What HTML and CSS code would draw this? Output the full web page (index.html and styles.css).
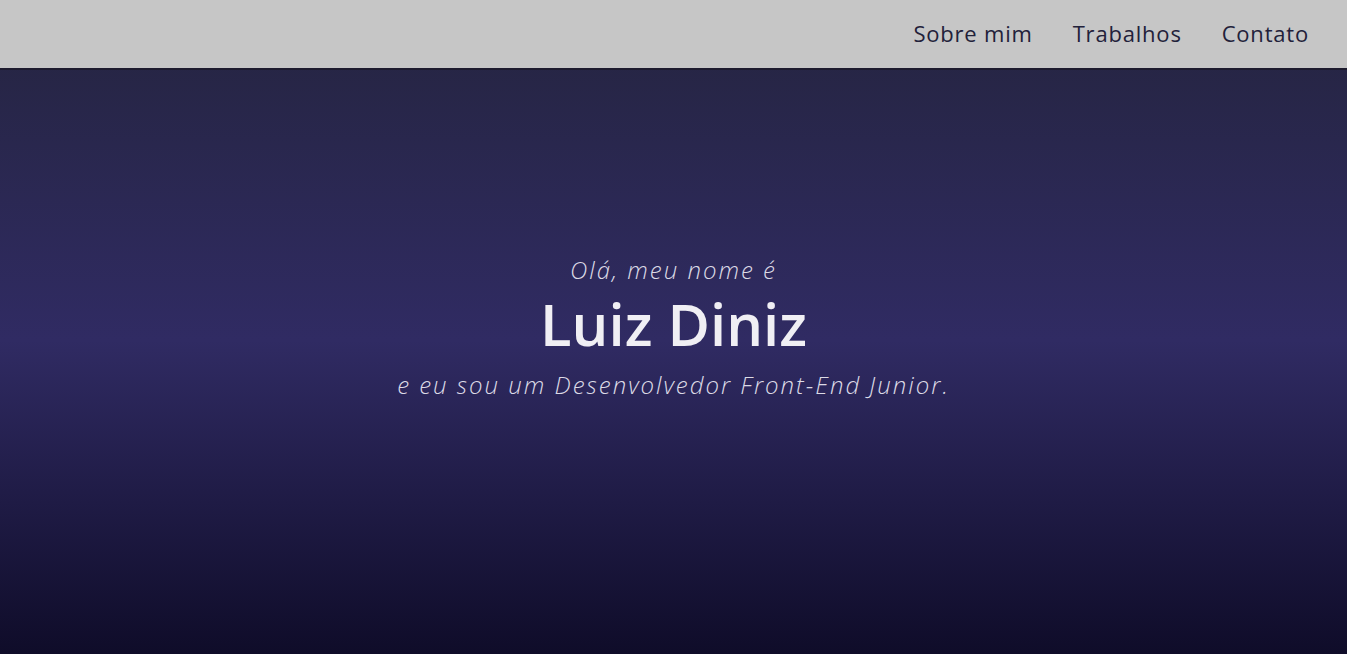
FILE: index.html
```html
<!DOCTYPE html>
<html lang="pt-BR">
<head>
<meta charset="utf-8">
<title>Luiz Diniz</title>
<link rel="stylesheet" href="styles.css">
</head>
<body>
<header class="topbar">
  <nav class="nav">
    <a href="#sobre" class="nav-link">Sobre mim</a>
    <a href="#trabalhos" class="nav-link">Trabalhos</a>
    <a href="#contato" class="nav-link">Contato</a>
  </nav>
</header>
<main>
  <section class="hero">
    <p class="hero-intro">Olá, meu nome é</p>
    <h1 class="hero-name">Luiz Diniz</h1>
    <p class="hero-role">e eu sou um Desenvolvedor Front-End Junior.</p>
  </section>
</main>
</body>
</html>
```

FILE: styles.css
```css
* { box-sizing: border-box; }
html, body { margin: 0; padding: 0; }
body {
  font-family: "Open Sans", "Liberation Sans", sans-serif;
  background: #0f0c29;
}
.topbar {
  position: fixed;
  top: 0; left: 0; right: 0;
  height: 70px;
  background: #c6c6c6;
  border-bottom: 2px solid #1d1b2e;
  display: flex;
  justify-content: flex-end;
  align-items: center;
  padding-right: 38px;
  z-index: 10;
}
.nav { display: flex; gap: 40px; }
.nav-link {
  color: #22213a;
  text-decoration: none;
  font-size: 22px;
  letter-spacing: 0.8px;
  font-weight: 400;
  line-height: 1;
  padding-bottom: 2px;
}
.hero {
  height: 654px;
  background: linear-gradient(180deg, #24243e 0%, #302b63 52%, #0f0c29 100%);
  display: flex;
  flex-direction: column;
  align-items: center;
  justify-content: center;
  color: #ecebf2;
  text-align: center;
}
.hero-intro {
  margin: 0;
  font-size: 24px;
  letter-spacing: 2px;
  font-style: italic;
  font-weight: 300;
  color: #dcdae6;
}
.hero-name {
  margin: 0;
  font-size: 58px;
  font-weight: 600;
  line-height: 1.3;
  color: #f0eff4;
}
.hero-role {
  margin: 6px 0 0;
  font-size: 24px;
  letter-spacing: 2px;
  font-style: italic;
  font-weight: 300;
  color: #dcdae6;
}
```
